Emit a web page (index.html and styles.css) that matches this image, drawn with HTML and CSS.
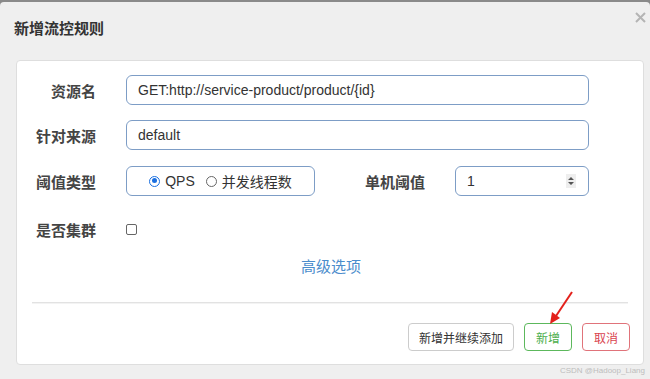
FILE: index.html
```html
<!DOCTYPE html>
<html lang="zh">
<head>
<meta charset="utf-8">
<title>新增流控规则</title>
<link rel="stylesheet" href="styles.css">
</head>
<body>
<div class="dialog">
  <div class="header">
    <h1 class="title">新增流控规则</h1>
    <svg class="close" width="11" height="11" viewBox="0 0 11 11"><path d="M1 1 L10 10 M10 1 L1 10" stroke="#b4b4b4" stroke-width="2" fill="none"/></svg>
  </div>
  <div class="panel">
    <div class="row r1">
      <label class="label">资源名</label>
      <div class="input">GET:http://service-product/product/{id}</div>
    </div>
    <div class="row r2">
      <label class="label">针对来源</label>
      <div class="input">default</div>
    </div>
    <div class="row r3">
      <label class="label">阈值类型</label>
      <div class="radio-box">
        <span class="radio checked"></span><span class="rtext">QPS</span>
        <span class="radio"></span><span class="rtext">并发线程数</span>
      </div>
      <label class="label label2">单机阈值</label>
      <div class="input number">
        <span>1</span>
        <span class="spin">
          <svg width="8" height="10" viewBox="0 0 8 10"><path d="M4 1 L7 4 H1 Z M1 6 H7 L4 9 Z" fill="#555"/></svg>
        </span>
      </div>
    </div>
    <div class="row r4">
      <label class="label">是否集群</label>
      <span class="checkbox"></span>
    </div>
    <div class="advanced"><a class="link">高级选项</a></div>
    <div class="divider"></div>
    <div class="footer">
      <button class="btn">新增并继续添加</button>
      <button class="btn btn-green">新增</button>
      <button class="btn btn-red">取消</button>
    </div>
  </div>
  <svg class="arrow" width="40" height="40" viewBox="0 0 40 40">
    <path d="M33 2 L17 26" stroke="#e3201b" stroke-width="2" fill="none"/>
    <path d="M11 34 L13 22 L21 28 Z" fill="#e3201b"/>
  </svg>
  <div class="watermark">CSDN @Hadoop_Liang</div>
</div>
</body>
</html>
```
FILE: styles.css
```css
html, body {
  margin: 0;
  padding: 0;
}
body {
  background: #8a8a8a;
  font-family: "Liberation Sans", "Noto Sans CJK SC", sans-serif;
  width: 650px;
  height: 379px;
  overflow: hidden;
}
.dialog {
  position: relative;
  margin-top: 2px;
  height: 377px;
  background: #efefef;
  border-radius: 4px 4px 0 0;
}
.header {
  position: relative;
  height: 58px;
  box-sizing: border-box;
  padding: 17px 14px 0;
}
.title {
  margin: 0;
  font-size: 15px;
  line-height: 20px;
  font-weight: bold;
  color: #333;
}
.close {
  position: absolute;
  right: 4px;
  top: 10px;
}
.panel {
  margin: 0 6px 0 16px;
  height: 305px;
  box-sizing: border-box;
  background: #fff;
  border: 1px solid #dedede;
  border-radius: 4px;
  padding-top: 14px;
  display: flex;
  flex-direction: column;
}
.row {
  display: flex;
  align-items: center;
  height: 30px;
  padding-right: 54px;
}
.r1 { margin-bottom: 15px; }
.r2 { margin-bottom: 16px; }
.r3 { margin-bottom: 18px; }
.r4 { margin-bottom: 13px; }
.label {
  width: 79px;
  margin-right: 30px;
  text-align: right;
  font-size: 15px;
  font-weight: bold;
  color: #444;
  flex: none;
}
.label2 {
  width: 110px;
}
.input {
  flex: 1;
  height: 30px;
  box-sizing: border-box;
  border: 1px solid #7d9dc6;
  border-radius: 6px;
  padding: 0 11px;
  display: flex;
  align-items: center;
  font-size: 14px;
  color: #333;
}
.number {
  justify-content: space-between;
  padding-right: 12px;
}
.spin {
  display: flex;
  align-items: center;
  justify-content: center;
  width: 10px;
  height: 14px;
  background: #eee;
}
.radio-box {
  width: 189px;
  height: 30px;
  box-sizing: border-box;
  border: 1px solid #7d9dc6;
  border-radius: 6px;
  display: flex;
  align-items: center;
  justify-content: center;
  font-size: 14px;
  color: #333;
  flex: none;
}
.radio {
  width: 11px;
  height: 11px;
  box-sizing: border-box;
  border: 1px solid #666;
  border-radius: 50%;
  margin-right: 5px;
  position: relative;
}
.radio.checked {
  border: 1.5px solid #1a6fe0;
}
.radio.checked::after {
  content: "";
  position: absolute;
  left: 1.5px;
  top: 1.5px;
  width: 5px;
  height: 5px;
  border-radius: 50%;
  background: #1a6fe0;
}
.rtext {
  margin-right: 11px;
}
.rtext:last-child {
  margin-right: 0;
}
.checkbox {
  width: 11px;
  height: 11px;
  box-sizing: border-box;
  border: 1px solid #666;
  border-radius: 2px;
}
.advanced {
  text-align: center;
  height: 20px;
  line-height: 20px;
  padding-left: 2px;
}
.link {
  font-size: 15px;
  color: #4a8ccc;
}
.divider {
  margin: 25px 15px 0;
  height: 1px;
  background: #e2e2e2;
  box-shadow: 0 1px 0 #f3f3f3;
}
.footer {
  display: flex;
  justify-content: flex-end;
  gap: 10px;
  padding-right: 13px;
  margin-top: 20px;
}
.btn {
  height: 28px;
  box-sizing: border-box;
  padding: 0 10px;
  background: #fff;
  border: 1px solid #cccccc;
  border-radius: 4px;
  font-family: "Liberation Sans", "Noto Sans CJK SC", sans-serif;
  font-size: 12px;
  color: #333;
}
.btn-green {
  width: 48px;
  border-color: #5cb85c;
  color: #4cae4c;
}
.btn-red {
  width: 48px;
  border-color: #e0737a;
  color: #d9434f;
}
.arrow {
  position: absolute;
  left: 539px;
  top: 288px;
}
.watermark {
  position: absolute;
  right: 5px;
  bottom: 4px;
  font-size: 8px;
  color: #bdbdbd;
}
```
